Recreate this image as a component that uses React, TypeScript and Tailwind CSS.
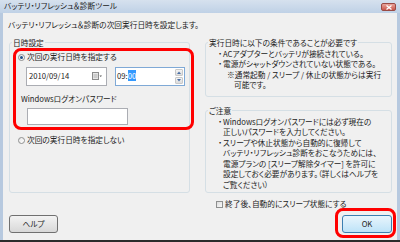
import { ReactNode } from 'react';

function Radio({ checked }: { checked?: boolean }) {
  return (
    <span className="w-[7px] h-[7px] rounded-full border border-[#8e8f8f] bg-gradient-to-br from-[#e6e6e6] to-[#ffffff] flex items-center justify-center shrink-0">
      {checked && <span className="w-[3px] h-[3px] rounded-full bg-[#1f4f86]" />}
    </span>
  );
}

function Group({ title, className, children }: { title: string; className?: string; children: ReactNode }) {
  return (
    <fieldset className={`border border-[#d5dfe5] rounded-[3px] ${className ?? ''}`}>
      <legend className="ml-[2px] px-[1px] leading-[10px]">{title}</legend>
      {children}
    </fieldset>
  );
}

function Bullet({ children }: { children: ReactNode }) {
  return (
    <div className="flex pl-[11px]">
      <span className="w-[6px] shrink-0 text-center">・</span>
      <span>{children}</span>
    </div>
  );
}

export default function App() {
  return (
    <div className="w-[400px] h-[242px] flex flex-col bg-[#b7c9df] font-['Noto_Sans_CJK_JP',sans-serif] [font-feature-settings:'palt'] text-[7.7px] leading-[10.5px] text-[#222] overflow-hidden">
      <div className="h-[13px] shrink-0 flex items-start justify-between pl-[4px] pr-[4px] bg-gradient-to-b from-[#d6e1ee] to-[#bfd1e6]">
        <span className="leading-[12px] text-[#222]">バッテリ・リフレッシュ＆診断ツール</span>
        <div className="mt-[3px] w-[15px] h-[8px] rounded-[2px] border border-[#9a4a44] bg-gradient-to-b from-[#e8a59c] to-[#c9554b] flex items-center justify-center">
          <svg width="6" height="5" viewBox="0 0 6 5">
            <path d="M0.5 0.5 L5.5 4.5 M5.5 0.5 L0.5 4.5" stroke="#fff" strokeWidth="1.3" />
          </svg>
        </div>
      </div>

      <div className="flex-1 mx-[3px] bg-[#f0f0f0] relative flex flex-col pt-[7px]">
        <div className="ml-[5px]">バッテリ・リフレッシュ＆診断の次回実行日時を設定します。</div>

        <div className="flex mt-[7px]">
          <div className="ml-[6px] w-[181px] flex flex-col">
            <Group title="日時設定" className="h-[155px]">
              <div className="mt-[5px] h-[10px] flex items-center gap-[2px] pl-[8px]">
                <Radio checked />
                <span>次回の実行日時を指定する</span>
              </div>
              <div className="mt-[4px] flex pl-[16px]">
                <div className="w-[81px] h-[19px] bg-white border border-[#abadb3] flex items-center justify-between pl-[2px] pr-[4px]">
                  <span>2010/09/14</span>
                  <svg width="10" height="8" viewBox="0 0 10 8">
                    <rect x="0.5" y="0.5" width="6" height="7" fill="#e8e8e8" stroke="#8c8c8c" />
                    <path d="M1.5 3 H5.5 M1.5 5 H5.5" stroke="#b0b0b0" />
                    <path d="M7.5 3.5 L10 3.5 L8.75 5 Z" fill="#555" />
                  </svg>
                </div>
                <div className="ml-[8px] w-[70px] h-[19px] bg-white border border-[#7fa9d6] flex items-center justify-between pl-[1px] pr-[1px]">
                  <span>
                    09:<span className="bg-[#3399ff] text-white">00</span>
                  </span>
                  <div className="flex flex-col gap-[1px]">
                    <div className="w-[8px] h-[7px] rounded-[1px] border border-[#c9c9c9] bg-gradient-to-b from-[#f4f4f4] to-[#dcdcdc] flex items-center justify-center">
                      <svg width="4" height="3" viewBox="0 0 4 3"><path d="M0 3 L2 0.5 L4 3 Z" fill="#4a6fa5" /></svg>
                    </div>
                    <div className="w-[8px] h-[7px] rounded-[1px] border border-[#c9c9c9] bg-gradient-to-b from-[#f4f4f4] to-[#dcdcdc] flex items-center justify-center">
                      <svg width="4" height="3" viewBox="0 0 4 3"><path d="M0 0 L2 2.5 L4 0 Z" fill="#4a6fa5" /></svg>
                    </div>
                  </div>
                </div>
              </div>
              <div className="mt-[8px] pl-[11px] leading-[10px]">Windowsログオンパスワード</div>
              <div className="mt-[4px] ml-[17px] w-[101px] h-[17px] bg-white border border-[#abadb3]" />
              <div className="mt-[11px] h-[10px] flex items-center gap-[2px] pl-[8px]">
                <Radio />
                <span>次回の実行日時を指定しない</span>
              </div>
            </Group>
            <button className="mt-[22px] w-[49px] h-[18px] rounded-[3px] border border-[#707070] bg-gradient-to-b from-[#f3f3f3] to-[#d8d8d8] text-[#222] leading-[10px]">
              ヘルプ
            </button>
          </div>

          <div className="ml-[15px] w-[187px] flex flex-col">
            <Group title="実行日時に以下の条件であることが必要です" className="h-[59px]">
              <div className="mt-[1px]">
                <Bullet>ACアダプターとバッテリが接続されている。</Bullet>
                <Bullet>電源がシャットダウンされていない状態である。</Bullet>
                <div className="pl-[21px]">※通常起動 / スリープ / 休止の状態からは実行</div>
                <div className="pl-[28px]">可能です。</div>
              </div>
            </Group>
            <Group title="ご注意" className="mt-[9px] h-[87px]">
              <div className="mt-[1px]">
                <Bullet>Windowsログオンパスワードには必ず現在の</Bullet>
                <div className="pl-[17px]">正しいパスワードを入力してください。</div>
                <Bullet>スリープや休止状態から自動的に復帰して</Bullet>
                <div className="pl-[17px]">バッテリ・リフレッシュ診断をおこなうためには、</div>
                <div className="pl-[17px]">電源プランの [スリープ解除タイマー] を許可に</div>
                <div className="pl-[17px]">設定しておく必要があります。（詳しくはヘルプを</div>
                <div className="pl-[17px]">ご覧ください）</div>
              </div>
            </Group>
            <div className="mt-[7px] h-[10px] flex items-center gap-[2px] pl-[11px]">
              <span className="w-[7px] h-[7px] border border-[#8e8f8f] bg-gradient-to-br from-[#dcdcdc] to-[#fafafa]" />
              <span>終了後、自動的にスリープ状態にする</span>
            </div>
            <button className="mt-[5px] self-end w-[50px] h-[18px] rounded-[3px] border border-[#3c7fb1] bg-gradient-to-b from-[#e9f5fc] to-[#bde3f8] text-[#222] leading-[10px]">
              OK
            </button>
          </div>
        </div>

        <div className="absolute left-[10px] top-[35px] w-[181px] h-[82px] border-[3px] border-[#ff0000] rounded-[8px]" />
        <div className="absolute left-[332px] top-[195px] w-[61px] h-[30px] border-[3px] border-[#ff0000] rounded-[8px]" />
      </div>
      <div className="h-[2px] shrink-0 bg-[#2b2b2b]" />
    </div>
  );
}
